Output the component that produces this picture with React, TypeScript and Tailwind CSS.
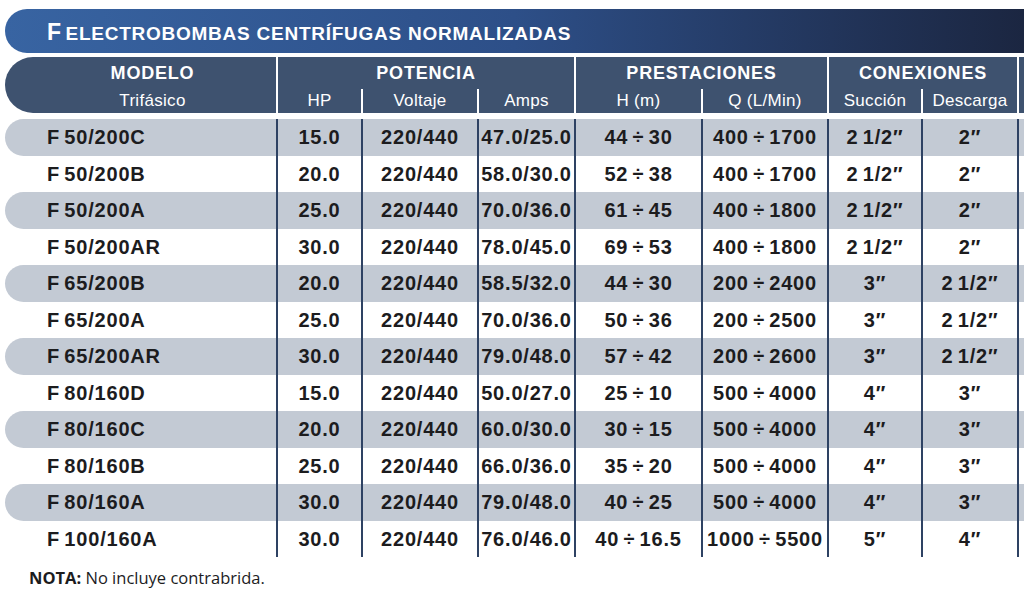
const widths = [271, 85, 116, 97, 127, 126, 94, 96];

const rows: string[][] = [
  ["F 50/200C", "15.0", "220/440", "47.0/25.0", "44 ÷ 30", "400 ÷ 1700", "2 1/2″", "2″"],
  ["F 50/200B", "20.0", "220/440", "58.0/30.0", "52 ÷ 38", "400 ÷ 1700", "2 1/2″", "2″"],
  ["F 50/200A", "25.0", "220/440", "70.0/36.0", "61 ÷ 45", "400 ÷ 1800", "2 1/2″", "2″"],
  ["F 50/200AR", "30.0", "220/440", "78.0/45.0", "69 ÷ 53", "400 ÷ 1800", "2 1/2″", "2″"],
  ["F 65/200B", "20.0", "220/440", "58.5/32.0", "44 ÷ 30", "200 ÷ 2400", "3″", "2 1/2″"],
  ["F 65/200A", "25.0", "220/440", "70.0/36.0", "50 ÷ 36", "200 ÷ 2500", "3″", "2 1/2″"],
  ["F 65/200AR", "30.0", "220/440", "79.0/48.0", "57 ÷ 42", "200 ÷ 2600", "3″", "2 1/2″"],
  ["F 80/160D", "15.0", "220/440", "50.0/27.0", "25 ÷ 10", "500 ÷ 4000", "4″", "3″"],
  ["F 80/160C", "20.0", "220/440", "60.0/30.0", "30 ÷ 15", "500 ÷ 4000", "4″", "3″"],
  ["F 80/160B", "25.0", "220/440", "66.0/36.0", "35 ÷ 20", "500 ÷ 4000", "4″", "3″"],
  ["F 80/160A", "30.0", "220/440", "79.0/48.0", "40 ÷ 25", "500 ÷ 4000", "4″", "3″"],
  ["F 100/160A", "30.0", "220/440", "76.0/46.0", "40 ÷ 16.5", "1000 ÷ 5500", "5″", "4″"],
];

const groups = [
  { title: "POTENCIA", subs: [["HP", 85], ["Voltaje", 116], ["Amps", 97]] },
  { title: "PRESTACIONES", subs: [["H (m)", 127], ["Q (L/Min)", 126]] },
  { title: "CONEXIONES", subs: [["Succión", 94], ["Descarga", 96]] },
] as { title: string; subs: [string, number][] }[];

function HeaderGroup({ title, subs }: { title: string; subs: [string, number][] }) {
  const total = subs.reduce((s, [, w]) => s + w, 0);
  return (
    <div className="flex flex-col border-l-2 border-white" style={{ width: total }}>
      <div className="flex h-[32px] items-center justify-center text-[18px] font-bold tracking-[0.8px]">{title}</div>
      <div className="flex h-[24px]">
        {subs.map(([label, w], i) => (
          <div
            key={label}
            className={`flex items-center justify-center text-[17px] tracking-[0.3px] ${i > 0 ? "border-l-2 border-white" : ""}`}
            style={{ width: i === 0 ? w - 2 : w }}
          >
            {label}
          </div>
        ))}
      </div>
    </div>
  );
}

export default function App() {
  return (
    <div className="h-[591px] w-[1024px] overflow-hidden bg-white pt-[9px] font-['Liberation_Sans',Arial,sans-serif]">
      <div className="ml-[5px] flex h-[44px] items-center rounded-l-[22px] bg-linear-to-r from-[#3864a2] via-[#2d4f88] to-[#1b2641] pl-[42px] font-bold text-white">
        <div className="pt-[2px]">
          <span className="text-[23px]">F</span>{" "}
          <span className="text-[19px] tracking-[0.75px]">ELECTROBOMBAS CENTRÍFUGAS NORMALIZADAS</span>
        </div>
      </div>

      <div className="mt-[4px] ml-[5px] flex h-[56px] rounded-l-[28px] bg-[#3e526f] text-white">
        <div className="flex w-[271px] flex-col pl-[24px]">
          <div className="flex h-[32px] items-center justify-center text-[18px] font-bold tracking-[0.8px]">MODELO</div>
          <div className="flex h-[24px] items-center justify-center text-[17px] tracking-[0.3px]">Trifásico</div>
        </div>
        {groups.map((g) => (
          <HeaderGroup key={g.title} title={g.title} subs={g.subs} />
        ))}
        <div className="flex-1 border-l-2 border-white" />
      </div>

      <div className="mt-[6px] ml-[5px]">
        {rows.map((row, r) => (
          <div
            key={row[0]}
            className={`flex h-[36.5px] text-[20px] font-bold tracking-[0.8px] [word-spacing:-2px] text-[#1c1c1e] ${r % 2 === 0 ? "rounded-l-full bg-[#c3cad4]" : ""}`}
          >
            {row.map((cell, c) =>
              c === 0 ? (
                <div key={c} className="flex items-center pl-[42px]" style={{ width: widths[0] }}>
                  {cell}
                </div>
              ) : (
                <div
                  key={c}
                  className="flex items-center justify-center border-l-2 border-[#2e4263] whitespace-nowrap"
                  style={{ width: widths[c] }}
                >
                  {cell}
                </div>
              )
            )}
            <div className="flex-1 border-l-2 border-[#2e4263]" />
          </div>
        ))}
      </div>

      <div className="mt-[9px] pl-[29px] font-['Open_Sans',sans-serif] text-[16.5px] text-[#1c1c1e]">
        <span className="font-bold">NOTA:</span> No incluye contrabrida.
      </div>
    </div>
  );
}
